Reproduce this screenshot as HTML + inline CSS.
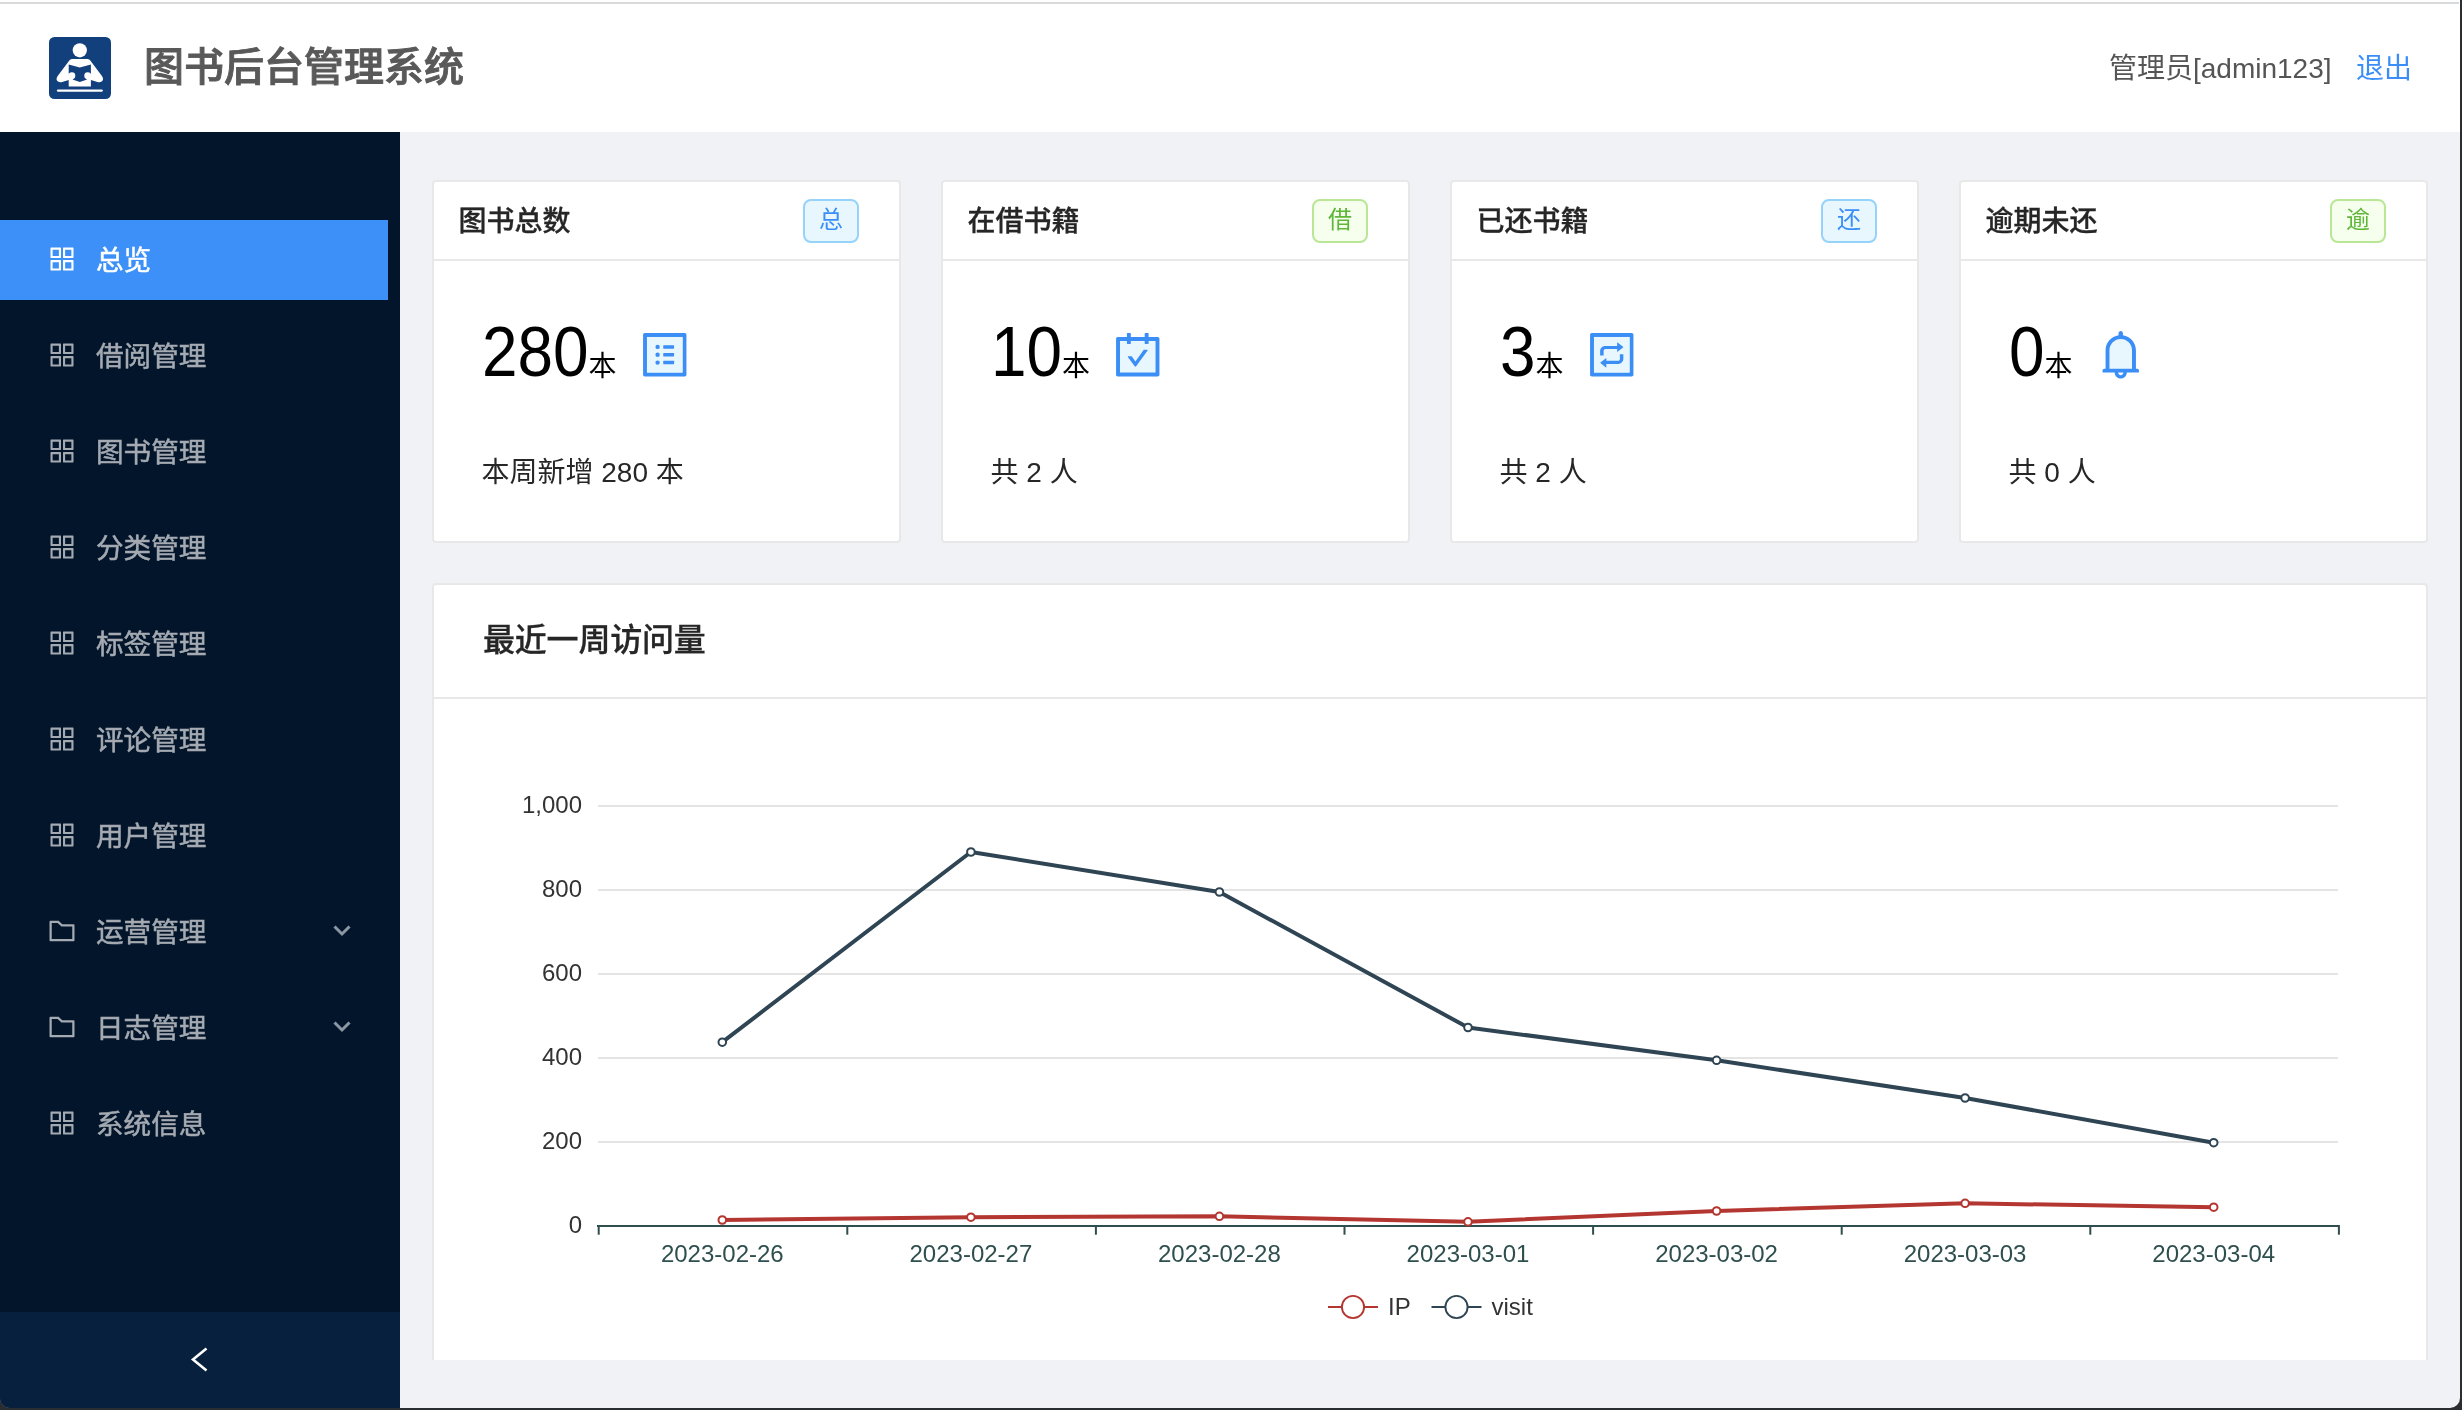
<!DOCTYPE html>
<html lang="zh-CN">
<head>
<meta charset="utf-8">
<title>图书后台管理系统</title>
<style>
*{box-sizing:border-box;margin:0;padding:0}
html,body{width:2462px;height:1410px;overflow:hidden;background:#2a2e31}
body{font-family:"Liberation Sans","Noto Sans CJK SC",sans-serif;color:#222;position:relative}
#win{will-change:transform;position:absolute;left:0;top:0;width:2460px;height:1408px;background:#f0f2f5;overflow:hidden;border-radius:0 0 10px 10px}
#hdr{position:absolute;left:0;top:0;width:2460px;height:132px;background:#fff}
#topline{position:absolute;left:0;top:2px;width:2459px;height:2px;background:#d8dadc}
#logo{position:absolute;left:49px;top:37px;width:62px;height:62px}
#title{position:absolute;left:144px;top:36.500px;height:60px;line-height:60px;font-size:40px;font-weight:500;-webkit-text-stroke:.9px #595959;color:#595959;white-space:nowrap;letter-spacing:0}
#user{position:absolute;left:2109px;top:49px;height:40px;line-height:40px;font-size:28px;color:#555;white-space:nowrap}
#logout{position:absolute;left:2356px;top:49px;height:40px;line-height:40px;font-size:28px;color:#3a8ef6;white-space:nowrap}
#side{position:absolute;left:0;top:132px;width:400px;height:1276px;background:#03152a}
#trig{position:absolute;left:0;top:1180px;width:400px;height:96px;background:#07203d}
.mi{position:absolute;left:0;width:388px;height:80px;color:#a4aab2;font-size:27.600px;line-height:80px;white-space:nowrap}
.mi.sel{background:#3c90f7;color:#fff}
.mi svg.ic{position:absolute;left:46px;top:23px;width:32px;height:32px;fill:currentColor}
.mi span{position:absolute;left:96px;top:.5px;-webkit-text-stroke:.5px currentColor}
.mi svg.ch{position:absolute;left:332px;top:29.400px;width:20px;height:20px}
.card{position:absolute;top:180px;width:469px;height:363px;background:#fff;border:2px solid #e8e8e8;border-radius:4px}
.card .hd{position:absolute;left:0;top:0;width:465px;height:79px;border-bottom:2px solid #e8e8e8}
.card .tt{position:absolute;left:24.400px;top:19px;font-size:28px;line-height:42px;font-weight:500;-webkit-text-stroke:.3px #262626;color:#262626;white-space:nowrap}
.tag{position:absolute;left:369px;top:17px;width:56px;height:44px;border:2px solid #95d3fb;background:#e8f6fe;color:#3a8ef6;border-radius:8px;font-size:24px;line-height:38px;text-align:center}
.tag.g{border-color:#b9e796;background:#f6feee;color:#5fb73a}
.num{position:absolute;left:48px;top:130px;height:80px;line-height:80px;font-size:70px;color:#000;white-space:nowrap}
.num .d{display:inline-block;white-space:nowrap}
.num .d i{display:inline-block;font-style:normal;transform:scaleX(.912);transform-origin:0 50%}
.num small{font-size:28px;letter-spacing:0;margin-left:0}
.sub{position:absolute;left:47.500px;top:269px;font-size:28px;line-height:44px;color:#262626;white-space:nowrap}
.tico{position:absolute;top:145.300px;width:55.500px;height:55.500px}
#chart{position:absolute;left:432px;top:583px;width:1996px;height:777px;background:#fff;border:2px solid #e8e8e8;border-bottom:none;border-radius:4px 4px 0 0}
#chart .hd{position:absolute;left:0;top:0;width:1992px;height:114px;border-bottom:2px solid #e8e8e8}
#chart .tt{position:absolute;left:49px;top:31px;font-size:32px;line-height:48px;font-weight:500;-webkit-text-stroke:.3px #262626;letter-spacing:-.2px;color:#262626;white-space:nowrap}
#plot{position:absolute;left:0;top:0;width:2460px;height:1408px}
#plot text{font-family:"Liberation Sans",sans-serif;font-size:24px}
</style>
</head>
<body>
<div id="win">
<div id="hdr">
<div id="topline"></div>
<svg id="logo" viewBox="0 0 62 62"><rect width="62" height="62" rx="5.500" fill="#12407d"/><circle cx="30.8" cy="13.300" r="7.100" fill="#fff"/><path d="M22.9 22.100 Q21.3 22.100 20.3 23.600 L8.500 39.300 Q6.300 42.800 9 44.600 Q10.800 45.800 13.200 45 L19.700 43.100 L19.700 49.600 L41.9 49.600 L41.9 43.100 L48.4 45 Q50.8 45.800 52.6 44.600 Q55.3 42.800 53.1 39.300 L41.3 23.600 Q40.3 22.100 38.7 22.100 Z" fill="#fff"/><path d="M19.700 27.400 L30.8 30.600 L41.9 27.400 L41.9 36.500 L37.4 42.700 L30.8 45 L24.200 42.700 L19.700 36.500 Z" fill="#12407d"/><circle cx="22.900" cy="38.700" r="3.400" fill="#fff"/><circle cx="38.7" cy="38.700" r="3.400" fill="#fff"/><rect x="7.900" y="52.400" width="45.900" height="2.400" rx="1.200" fill="#fff"/></svg>
<div id="title">图书后台管理系统</div>
<div id="user">管理员[admin123]</div>
<div id="logout">退出</div>
</div>
<div id="side">
<div id="trig"></div>
<div class="mi sel" style="top:88px"><svg class="ic" viewBox="0 0 1024 1024"><path d="M464 144H160c-8.800 0-16 7.200-16 16v304c0 8.800 7.200 16 16 16h304c8.800 0 16-7.200 16-16V160c0-8.800-7.200-16-16-16zm-52 268H212V212h200v200zm452-268H560c-8.800 0-16 7.200-16 16v304c0 8.800 7.200 16 16 16h304c8.800 0 16-7.200 16-16V160c0-8.800-7.200-16-16-16zm-52 268H612V212h200v200zM464 544H160c-8.800 0-16 7.200-16 16v304c0 8.800 7.200 16 16 16h304c8.800 0 16-7.200 16-16V560c0-8.800-7.200-16-16-16zm-52 268H212V612h200v200zm452-268H560c-8.800 0-16 7.200-16 16v304c0 8.800 7.200 16 16 16h304c8.800 0 16-7.200 16-16V560c0-8.800-7.200-16-16-16zm-52 268H612V612h200v200z"/></svg><span>总览</span></div>
<div class="mi" style="top:184px"><svg class="ic" viewBox="0 0 1024 1024"><path d="M464 144H160c-8.800 0-16 7.200-16 16v304c0 8.800 7.200 16 16 16h304c8.800 0 16-7.200 16-16V160c0-8.800-7.200-16-16-16zm-52 268H212V212h200v200zm452-268H560c-8.800 0-16 7.200-16 16v304c0 8.800 7.200 16 16 16h304c8.800 0 16-7.200 16-16V160c0-8.800-7.200-16-16-16zm-52 268H612V212h200v200zM464 544H160c-8.800 0-16 7.200-16 16v304c0 8.800 7.200 16 16 16h304c8.800 0 16-7.200 16-16V560c0-8.800-7.200-16-16-16zm-52 268H212V612h200v200zm452-268H560c-8.800 0-16 7.200-16 16v304c0 8.800 7.200 16 16 16h304c8.800 0 16-7.200 16-16V560c0-8.800-7.200-16-16-16zm-52 268H612V612h200v200z"/></svg><span>借阅管理</span></div>
<div class="mi" style="top:280px"><svg class="ic" viewBox="0 0 1024 1024"><path d="M464 144H160c-8.800 0-16 7.200-16 16v304c0 8.800 7.200 16 16 16h304c8.800 0 16-7.200 16-16V160c0-8.800-7.200-16-16-16zm-52 268H212V212h200v200zm452-268H560c-8.800 0-16 7.200-16 16v304c0 8.800 7.200 16 16 16h304c8.800 0 16-7.200 16-16V160c0-8.800-7.200-16-16-16zm-52 268H612V212h200v200zM464 544H160c-8.800 0-16 7.200-16 16v304c0 8.800 7.200 16 16 16h304c8.800 0 16-7.200 16-16V560c0-8.800-7.200-16-16-16zm-52 268H212V612h200v200zm452-268H560c-8.800 0-16 7.200-16 16v304c0 8.800 7.200 16 16 16h304c8.800 0 16-7.200 16-16V560c0-8.800-7.200-16-16-16zm-52 268H612V612h200v200z"/></svg><span>图书管理</span></div>
<div class="mi" style="top:376px"><svg class="ic" viewBox="0 0 1024 1024"><path d="M464 144H160c-8.800 0-16 7.200-16 16v304c0 8.800 7.200 16 16 16h304c8.800 0 16-7.200 16-16V160c0-8.800-7.200-16-16-16zm-52 268H212V212h200v200zm452-268H560c-8.800 0-16 7.200-16 16v304c0 8.800 7.200 16 16 16h304c8.800 0 16-7.200 16-16V160c0-8.800-7.200-16-16-16zm-52 268H612V212h200v200zM464 544H160c-8.800 0-16 7.200-16 16v304c0 8.800 7.200 16 16 16h304c8.800 0 16-7.200 16-16V560c0-8.800-7.200-16-16-16zm-52 268H212V612h200v200zm452-268H560c-8.800 0-16 7.200-16 16v304c0 8.800 7.200 16 16 16h304c8.800 0 16-7.200 16-16V560c0-8.800-7.200-16-16-16zm-52 268H612V612h200v200z"/></svg><span>分类管理</span></div>
<div class="mi" style="top:472px"><svg class="ic" viewBox="0 0 1024 1024"><path d="M464 144H160c-8.800 0-16 7.200-16 16v304c0 8.800 7.200 16 16 16h304c8.800 0 16-7.200 16-16V160c0-8.800-7.200-16-16-16zm-52 268H212V212h200v200zm452-268H560c-8.800 0-16 7.200-16 16v304c0 8.800 7.200 16 16 16h304c8.800 0 16-7.200 16-16V160c0-8.800-7.200-16-16-16zm-52 268H612V212h200v200zM464 544H160c-8.800 0-16 7.200-16 16v304c0 8.800 7.200 16 16 16h304c8.800 0 16-7.200 16-16V560c0-8.800-7.200-16-16-16zm-52 268H212V612h200v200zm452-268H560c-8.800 0-16 7.200-16 16v304c0 8.800 7.200 16 16 16h304c8.800 0 16-7.200 16-16V560c0-8.800-7.200-16-16-16zm-52 268H612V612h200v200z"/></svg><span>标签管理</span></div>
<div class="mi" style="top:568px"><svg class="ic" viewBox="0 0 1024 1024"><path d="M464 144H160c-8.800 0-16 7.200-16 16v304c0 8.800 7.200 16 16 16h304c8.800 0 16-7.200 16-16V160c0-8.800-7.200-16-16-16zm-52 268H212V212h200v200zm452-268H560c-8.800 0-16 7.200-16 16v304c0 8.800 7.200 16 16 16h304c8.800 0 16-7.200 16-16V160c0-8.800-7.200-16-16-16zm-52 268H612V212h200v200zM464 544H160c-8.800 0-16 7.200-16 16v304c0 8.800 7.200 16 16 16h304c8.800 0 16-7.200 16-16V560c0-8.800-7.200-16-16-16zm-52 268H212V612h200v200zm452-268H560c-8.800 0-16 7.200-16 16v304c0 8.800 7.200 16 16 16h304c8.800 0 16-7.200 16-16V560c0-8.800-7.200-16-16-16zm-52 268H612V612h200v200z"/></svg><span>评论管理</span></div>
<div class="mi" style="top:664px"><svg class="ic" viewBox="0 0 1024 1024"><path d="M464 144H160c-8.800 0-16 7.200-16 16v304c0 8.800 7.200 16 16 16h304c8.800 0 16-7.200 16-16V160c0-8.800-7.200-16-16-16zm-52 268H212V212h200v200zm452-268H560c-8.800 0-16 7.200-16 16v304c0 8.800 7.200 16 16 16h304c8.800 0 16-7.200 16-16V160c0-8.800-7.200-16-16-16zm-52 268H612V212h200v200zM464 544H160c-8.800 0-16 7.200-16 16v304c0 8.800 7.200 16 16 16h304c8.800 0 16-7.200 16-16V560c0-8.800-7.200-16-16-16zm-52 268H212V612h200v200zm452-268H560c-8.800 0-16 7.200-16 16v304c0 8.800 7.200 16 16 16h304c8.800 0 16-7.200 16-16V560c0-8.800-7.200-16-16-16zm-52 268H612V612h200v200z"/></svg><span>用户管理</span></div>
<div class="mi" style="top:760px"><svg class="ic" viewBox="0 0 1024 1024"><path d="M880 298.400H521L403.700 186.200a8.150 8.150 0 0 0-5.500-2.200H144c-17.700 0-32 14.300-32 32v592c0 17.700 14.300 32 32 32h736c17.700 0 32-14.300 32-32V330.400c0-17.700-14.300-32-32-32zM840 768H184V256h188.500l119.600 114.400H840V768z"/></svg><span>运营管理</span><svg class="ch" viewBox="0 0 20 20"><path d="M2.500 5.500 L10 13 L17.500 5.500" fill="none" stroke="#8d97a3" stroke-width="3"/></svg></div>
<div class="mi" style="top:856px"><svg class="ic" viewBox="0 0 1024 1024"><path d="M880 298.400H521L403.700 186.200a8.150 8.150 0 0 0-5.500-2.200H144c-17.700 0-32 14.300-32 32v592c0 17.700 14.300 32 32 32h736c17.700 0 32-14.300 32-32V330.400c0-17.700-14.300-32-32-32zM840 768H184V256h188.500l119.600 114.400H840V768z"/></svg><span>日志管理</span><svg class="ch" viewBox="0 0 20 20"><path d="M2.500 5.500 L10 13 L17.500 5.500" fill="none" stroke="#8d97a3" stroke-width="3"/></svg></div>
<div class="mi" style="top:952px"><svg class="ic" viewBox="0 0 1024 1024"><path d="M464 144H160c-8.800 0-16 7.200-16 16v304c0 8.800 7.200 16 16 16h304c8.800 0 16-7.200 16-16V160c0-8.800-7.200-16-16-16zm-52 268H212V212h200v200zm452-268H560c-8.800 0-16 7.200-16 16v304c0 8.800 7.200 16 16 16h304c8.800 0 16-7.200 16-16V160c0-8.800-7.200-16-16-16zm-52 268H612V212h200v200zM464 544H160c-8.800 0-16 7.200-16 16v304c0 8.800 7.200 16 16 16h304c8.800 0 16-7.200 16-16V560c0-8.800-7.200-16-16-16zm-52 268H212V612h200v200zm452-268H560c-8.800 0-16 7.200-16 16v304c0 8.800 7.200 16 16 16h304c8.800 0 16-7.200 16-16V560c0-8.800-7.200-16-16-16zm-52 268H612V612h200v200z"/></svg><span>系统信息</span></div>
<svg style="position:absolute;left:184px;top:1212px;width:32px;height:32px" viewBox="0 0 32 32"><path d="M22.500 4.500 L9 15.500 L22.500 26.500" fill="none" stroke="#fff" stroke-width="2.600"/></svg>
</div>
<div class="card" style="left:432px"><div class="hd"><div class="tt">图书总数</div><div class="tag">总</div></div><div class="num"><span class="d" style="width:106.5px"><i>280</i></span><small>本</small></div><svg class="tico" style="left:203.2px" viewBox="0 0 1024 1024"><path fill="#3a8ef6" d="M880 112H144c-17.700 0-32 14.300-32 32v736c0 17.700 14.300 32 32 32h736c17.700 0 32-14.300 32-32V144c0-17.700-14.300-32-32-32zm-40 728H184V184h656v656z"/><rect x="184" y="184" width="656" height="656" fill="#e8f6fe"/><g fill="#3a8ef6"><circle cx="380" cy="368" r="40"/><circle cx="380" cy="512" r="40"/><circle cx="380" cy="656" r="40"/><rect x="484" y="336" width="200" height="64" rx="8"/><rect x="484" y="480" width="200" height="64" rx="8"/><rect x="484" y="624" width="200" height="64" rx="8"/></g></svg><div class="sub">本周新增 280 本</div></div>
<div class="card" style="left:941px"><div class="hd"><div class="tt">在借书籍</div><div class="tag g">借</div></div><div class="num"><span class="d" style="width:71.0px"><i>10</i></span><small>本</small></div><svg class="tico" style="left:167.0px" viewBox="0 0 1024 1024"><rect x="184" y="256" width="656" height="584" fill="#e8f6fe"/><path fill="#3a8ef6" d="M880 184H712v-64c0-4.400-3.600-8-8-8h-56c-4.400 0-8 3.600-8 8v64H384v-64c0-4.400-3.600-8-8-8h-56c-4.400 0-8 3.600-8 8v64H144c-17.700 0-32 14.300-32 32v664c0 17.700 14.300 32 32 32h736c17.700 0 32-14.300 32-32V216c0-17.700-14.300-32-32-32zm-40 656H184V256h128v48c0 4.400 3.600 8 8 8h56c4.400 0 8-3.600 8-8v-48h256v48c0 4.400 3.600 8 8 8h56c4.400 0 8-3.600 8-8v-48h128v584z"/><path fill="#3a8ef6" d="M688 420h-55.200c-5.100 0-10 2.500-13 6.600L468.900 634.400l-64.700-89c-3-4.100-7.800-6.600-13-6.600H336c-6.500 0-10.300 7.400-6.500 12.700l126.400 174a16.100 16.100 0 0 0 26 0l212.600-292.700c3.800-5.300 0-12.700-6.500-12.800z"/></svg><div class="sub">共 2 人</div></div>
<div class="card" style="left:1450px"><div class="hd"><div class="tt">已还书籍</div><div class="tag">还</div></div><div class="num"><span class="d" style="width:35.5px"><i>3</i></span><small>本</small></div><svg class="tico" style="left:131.6px" viewBox="0 0 1024 1024"><path fill="#3a8ef6" d="M880 112H144c-17.700 0-32 14.300-32 32v736c0 17.700 14.300 32 32 32h736c17.700 0 32-14.300 32-32V144c0-17.700-14.300-32-32-32zm-40 728H184V184h656v656z"/><rect x="184" y="184" width="656" height="656" fill="#e8f6fe"/><path fill="#3a8ef6" d="M298 527V445C298 393 340 351 392 351H612V290Q612 281 619 286L721 366Q727 371 721 376L619 456Q612 461 612 452V407H398C378 407 362 423 362 443V527Z"/><path fill="#3a8ef6" transform="rotate(180 512 516)" d="M298 527V445C298 393 340 351 392 351H612V290Q612 281 619 286L721 366Q727 371 721 376L619 456Q612 461 612 452V407H398C378 407 362 423 362 443V527Z"/></svg><div class="sub">共 2 人</div></div>
<div class="card" style="left:1959px"><div class="hd"><div class="tt">逾期未还</div><div class="tag g">逾</div></div><div class="num"><span class="d" style="width:35.5px"><i>0</i></span><small>本</small></div><svg class="tico" style="left:131.8px" viewBox="0 0 1024 1024"><path fill="#e8f6fe" d="M512 220c-55.600 0-107.800 21.600-147.100 60.900S304 372.400 304 428v340h416V428c0-55.600-21.600-107.800-60.900-147.100S567.600 220 512 220z"/><path fill="#3a8ef6" d="M816 768h-24V428c0-141.100-104.300-257.700-240-277.100V112c0-22.100-17.900-40-40-40s-40 17.900-40 40v38.900c-135.700 19.400-240 136-240 277.100v340h-24c-17.700 0-32 14.300-32 32v32c0 4.400 3.600 8 8 8h216c0 61.800 50.200 112 112 112s112-50.200 112-112h216c4.400 0 8-3.600 8-8v-32c0-17.700-14.300-32-32-32zM512 888c-26.500 0-48-21.500-48-48h96c0 26.500-21.500 48-48 48zM304 768V428c0-55.600 21.600-107.800 60.900-147.100S456.400 220 512 220c55.600 0 107.800 21.600 147.100 60.900S720 372.400 720 428v340H304z"/></svg><div class="sub">共 0 人</div></div>
<div id="chart"><div class="hd"><div class="tt">最近一周访问量</div></div></div>
<svg id="plot" viewBox="0 0 2460 1408">
<rect x="598" y="805" width="1740" height="2" fill="#e4e4e4"/>
<text x="582" y="812.9" text-anchor="end" fill="#333">1,000</text>
<rect x="598" y="889" width="1740" height="2" fill="#e4e4e4"/>
<text x="582" y="896.9" text-anchor="end" fill="#333">800</text>
<rect x="598" y="973" width="1740" height="2" fill="#e4e4e4"/>
<text x="582" y="980.9" text-anchor="end" fill="#333">600</text>
<rect x="598" y="1057" width="1740" height="2" fill="#e4e4e4"/>
<text x="582" y="1064.9" text-anchor="end" fill="#333">400</text>
<rect x="598" y="1141" width="1740" height="2" fill="#e4e4e4"/>
<text x="582" y="1148.9" text-anchor="end" fill="#333">200</text>
<text x="582" y="1232.9" text-anchor="end" fill="#333">0</text>
<rect x="597" y="1225" width="1742" height="2" fill="#2f4f4f"/>
<rect x="597.7" y="1225" width="2" height="9.700" fill="#2f4f4f"/>
<rect x="846.3" y="1225" width="2" height="9.700" fill="#2f4f4f"/>
<rect x="1094.9" y="1225" width="2" height="9.700" fill="#2f4f4f"/>
<rect x="1343.5" y="1225" width="2" height="9.700" fill="#2f4f4f"/>
<rect x="1592.1" y="1225" width="2" height="9.700" fill="#2f4f4f"/>
<rect x="1840.7" y="1225" width="2" height="9.700" fill="#2f4f4f"/>
<rect x="2089.3" y="1225" width="2" height="9.700" fill="#2f4f4f"/>
<rect x="2337.9" y="1225" width="2" height="9.700" fill="#2f4f4f"/>
<text x="722.3" y="1262" text-anchor="middle" fill="#2f4f4f">2023-02-26</text>
<text x="970.9" y="1262" text-anchor="middle" fill="#2f4f4f">2023-02-27</text>
<text x="1219.4" y="1262" text-anchor="middle" fill="#2f4f4f">2023-02-28</text>
<text x="1468.0" y="1262" text-anchor="middle" fill="#2f4f4f">2023-03-01</text>
<text x="1716.6" y="1262" text-anchor="middle" fill="#2f4f4f">2023-03-02</text>
<text x="1965.1" y="1262" text-anchor="middle" fill="#2f4f4f">2023-03-03</text>
<text x="2213.7" y="1262" text-anchor="middle" fill="#2f4f4f">2023-03-04</text>
<polyline points="722.3,1220 970.9,1217.2 1219.4,1216.3 1468.0,1221.8 1716.6,1211 1965.1,1203.3 2213.7,1207.2" fill="none" stroke="#b43630" stroke-width="4" stroke-linejoin="bevel"/>
<circle cx="722.3" cy="1220" r="3.800" fill="#fff" stroke="#b43630" stroke-width="2"/>
<circle cx="970.9" cy="1217.2" r="3.800" fill="#fff" stroke="#b43630" stroke-width="2"/>
<circle cx="1219.4" cy="1216.3" r="3.800" fill="#fff" stroke="#b43630" stroke-width="2"/>
<circle cx="1468.0" cy="1221.8" r="3.800" fill="#fff" stroke="#b43630" stroke-width="2"/>
<circle cx="1716.6" cy="1211" r="3.800" fill="#fff" stroke="#b43630" stroke-width="2"/>
<circle cx="1965.1" cy="1203.3" r="3.800" fill="#fff" stroke="#b43630" stroke-width="2"/>
<circle cx="2213.7" cy="1207.2" r="3.800" fill="#fff" stroke="#b43630" stroke-width="2"/>
<polyline points="722.3,1042.2 970.9,852 1219.4,892 1468.0,1027.5 1716.6,1060.3 1965.1,1098 2213.7,1142.7" fill="none" stroke="#2f4554" stroke-width="4" stroke-linejoin="bevel"/>
<circle cx="722.3" cy="1042.2" r="3.800" fill="#fff" stroke="#2f4554" stroke-width="2"/>
<circle cx="970.9" cy="852" r="3.800" fill="#fff" stroke="#2f4554" stroke-width="2"/>
<circle cx="1219.4" cy="892" r="3.800" fill="#fff" stroke="#2f4554" stroke-width="2"/>
<circle cx="1468.0" cy="1027.5" r="3.800" fill="#fff" stroke="#2f4554" stroke-width="2"/>
<circle cx="1716.6" cy="1060.3" r="3.800" fill="#fff" stroke="#2f4554" stroke-width="2"/>
<circle cx="1965.1" cy="1098" r="3.800" fill="#fff" stroke="#2f4554" stroke-width="2"/>
<circle cx="2213.7" cy="1142.7" r="3.800" fill="#fff" stroke="#2f4554" stroke-width="2"/>
<rect x="1328" y="1306" width="50" height="2" fill="#b43630"/><circle cx="1353" cy="1307" r="11.100" fill="#fff" stroke="#b43630" stroke-width="1.900"/><text x="1388" y="1315.100" fill="#333">IP</text>
<rect x="1431.5" y="1306" width="50" height="2" fill="#2f4554"/><circle cx="1456.5" cy="1307" r="11.100" fill="#fff" stroke="#2f4554" stroke-width="1.900"/><text x="1491.5" y="1315.100" fill="#333">visit</text>
</svg>
</div>
</body>
</html>
